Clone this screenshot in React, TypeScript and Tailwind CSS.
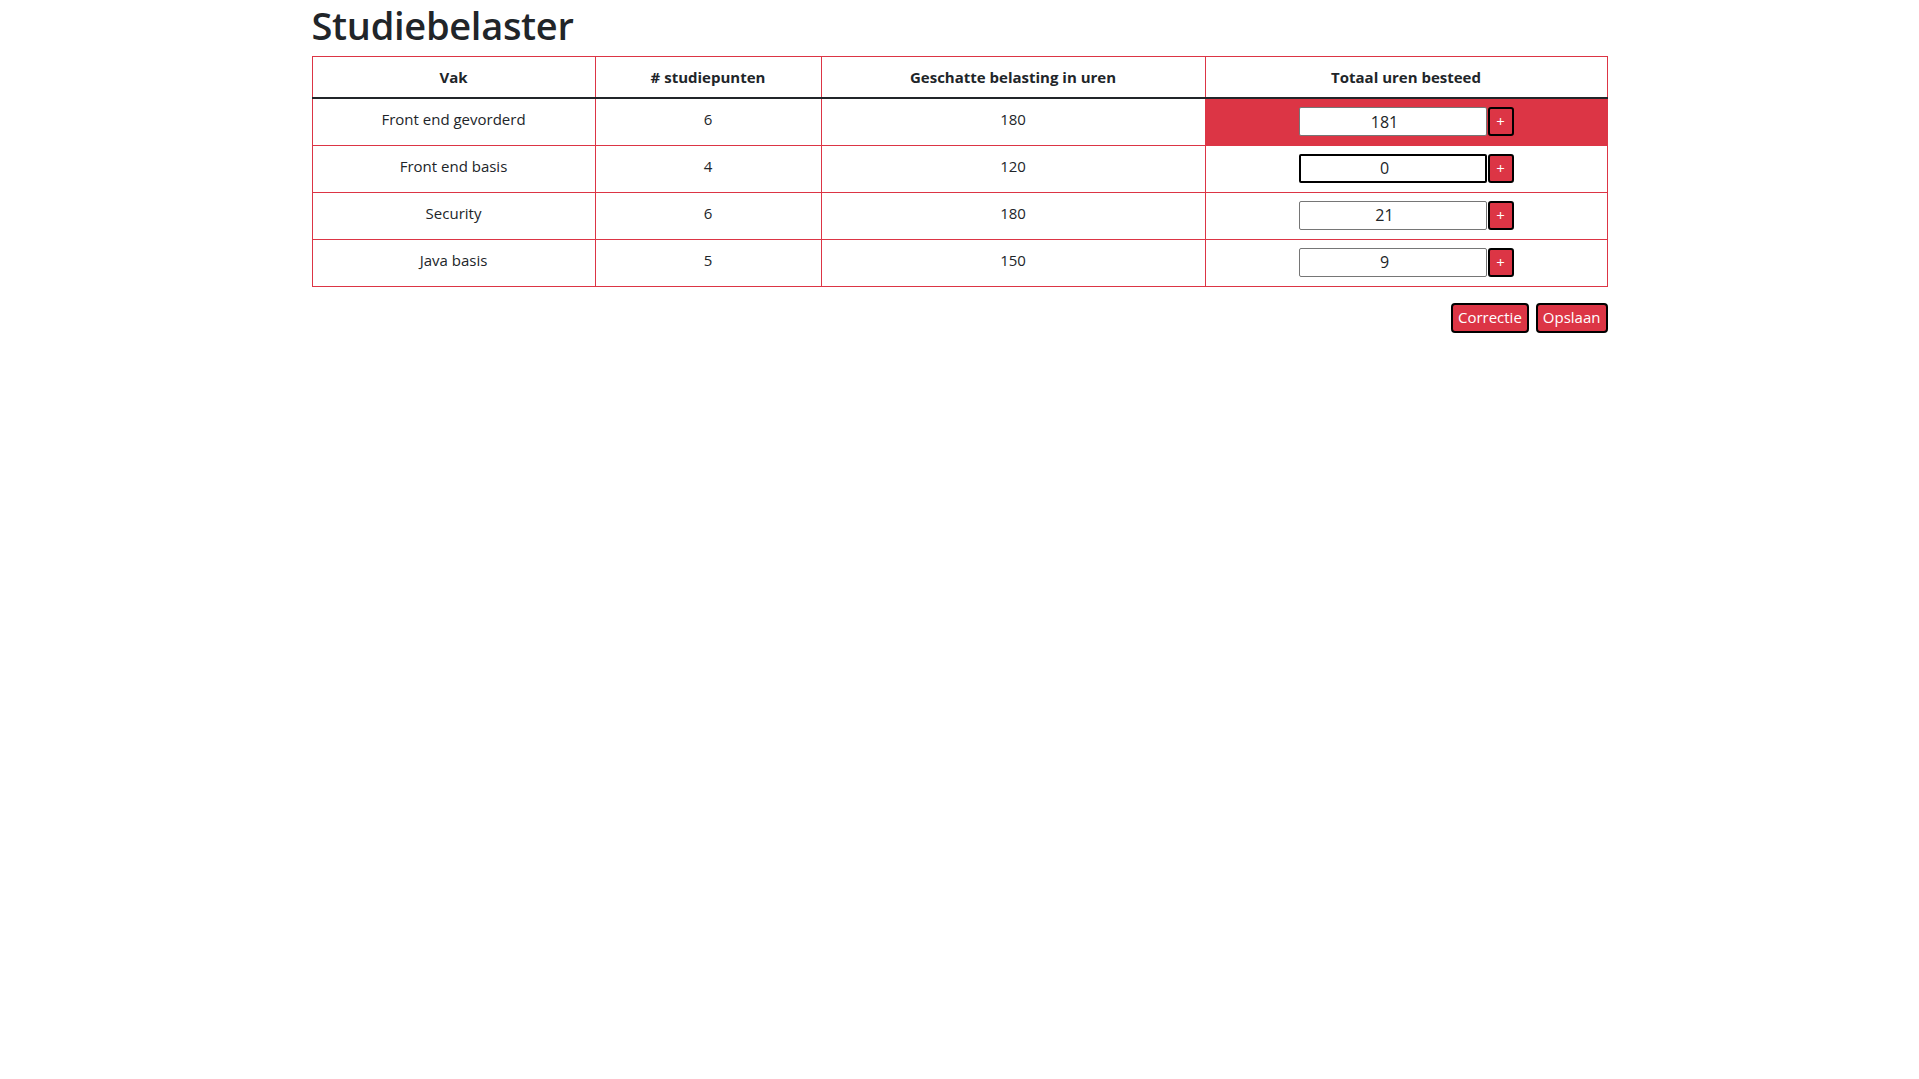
import React, { useState } from 'react';

type Vak = {
    naam: string;
    punten: number;
    uren: number;
    besteed: number;
};

const vakken: Vak[] = [
    { naam: 'Front end gevorderd', punten: 6, uren: 180, besteed: 181 },
    { naam: 'Front end basis', punten: 4, uren: 120, besteed: 0 },
    { naam: 'Security', punten: 6, uren: 180, besteed: 21 },
    { naam: 'Java basis', punten: 5, uren: 150, besteed: 9 },
];

const App: React.FC = () => {
    const [rows, setRows] = useState<Vak[]>(vakken);

    const addHour = (index: number) => {
        setRows(rows.map((r, i) => (i === index ? { ...r, besteed: r.besteed + 1 } : r)));
    };

    return (
        <div className="min-h-screen bg-white text-[#212529] font-['Open_Sans','Noto_Sans',sans-serif]">
            <div className="w-[1296px] mx-auto">
                <h1 className="text-[38px] leading-[50px] font-semibold mb-[6px] tracking-[-0.3px]">Studiebelaster</h1>

                <table className="w-full border-collapse text-[15px] mb-4">
                    <thead>
                        <tr>
                            <th className="w-[283px] border border-[#dc3545] border-b-[#212529] border-b-2 px-2 py-2 leading-6 font-bold">Vak</th>
                            <th className="w-[226px] border border-[#dc3545] border-b-[#212529] border-b-2 px-2 py-2 leading-6 font-bold"># studiepunten</th>
                            <th className="w-[384px] border border-[#dc3545] border-b-[#212529] border-b-2 px-2 py-2 leading-6 font-bold">Geschatte belasting in uren</th>
                            <th className="border border-[#dc3545] border-b-[#212529] border-b-2 px-2 py-2 leading-6 font-bold">Totaal uren besteed</th>
                        </tr>
                    </thead>
                    <tbody>
                        {rows.map((vak, index) => (
                            <tr key={vak.naam} className="h-[47px]">
                                <td className="border border-[#dc3545] px-2 py-2 leading-6 text-center align-top">{vak.naam}</td>
                                <td className="border border-[#dc3545] px-2 py-2 leading-6 text-center align-top">{vak.punten}</td>
                                <td className="border border-[#dc3545] px-2 py-2 leading-6 text-center align-top">{vak.uren}</td>
                                <td
                                    className={`border border-[#dc3545] px-2 py-2 text-center align-top ${
                                        vak.besteed > vak.uren ? 'bg-[#dc3545]' : ''
                                    }`}
                                >
                                    <div className="flex justify-center items-center gap-px">
                                        <input
                                            type="text"
                                            value={vak.besteed}
                                            readOnly
                                            className={`w-[188px] h-[29px] pr-4 bg-white text-center text-[16px] rounded-[2px] outline-none ${
                                                index === 1 ? 'border-2 border-black' : 'border border-[#767676]'
                                            }`}
                                        />
                                        <button
                                            onClick={() => addHour(index)}
                                            className="w-[26px] h-[29px] bg-[#dc3545] text-white text-[15px] border-2 border-black rounded-[3px] leading-none"
                                        >
                                            +
                                        </button>
                                    </div>
                                </td>
                            </tr>
                        ))}
                    </tbody>
                </table>

                <div className="flex justify-end gap-[7px]">
                    <button className="h-[30px] px-[5px] bg-[#dc3545] text-white text-[15px] border-2 border-black rounded-[4px]">
                        Correctie
                    </button>
                    <button className="h-[30px] px-[5px] bg-[#dc3545] text-white text-[15px] border-2 border-black rounded-[4px]">
                        Opslaan
                    </button>
                </div>
            </div>
        </div>
    );
};

export default App;
